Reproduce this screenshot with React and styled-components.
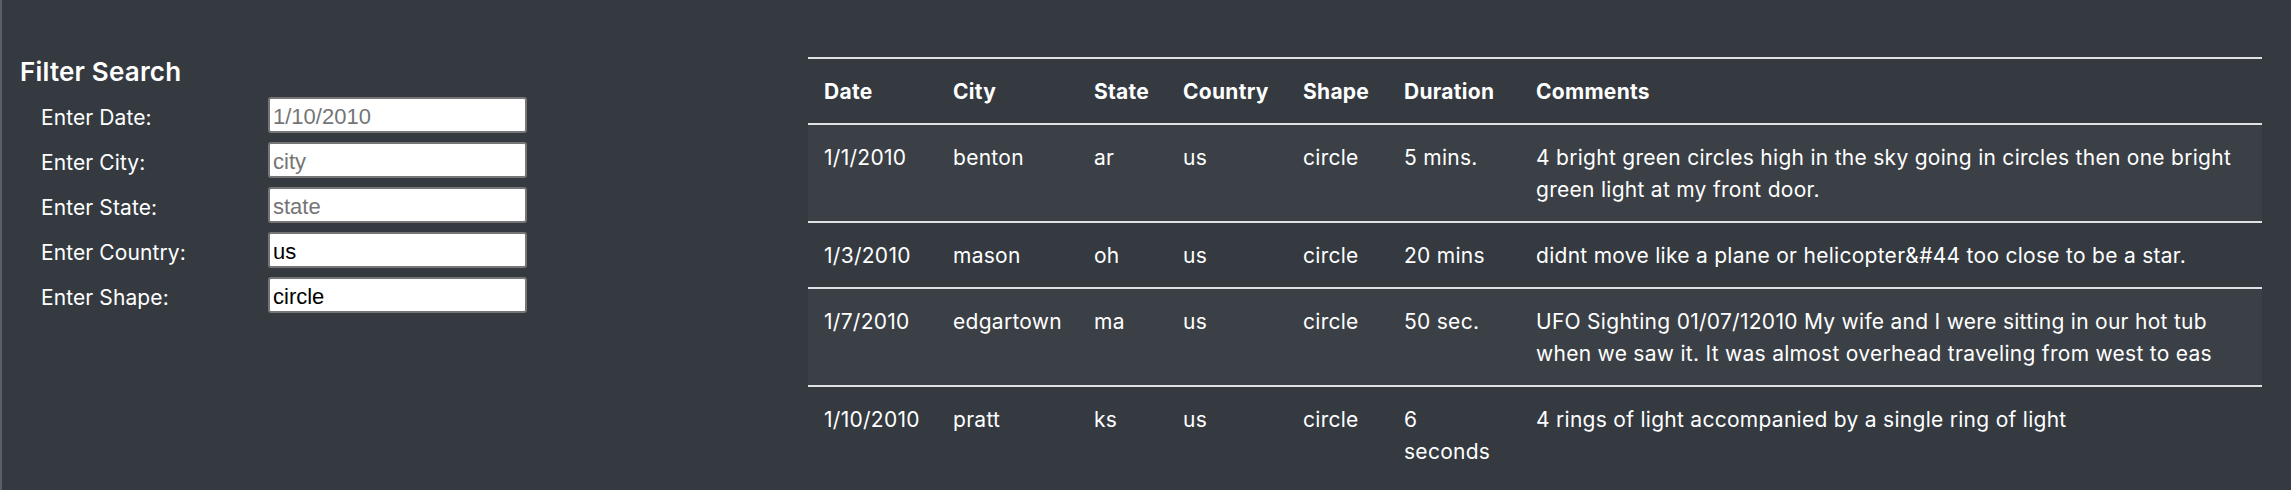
import React from 'react';
import styled, { createGlobalStyle } from 'styled-components';

// Base page styles
const GlobalStyle = createGlobalStyle`
  html, body {
    margin: 0;
    padding: 0;
    background-color: #343a40;
  }

  body {
    font-family: Inter, "Liberation Sans", sans-serif;
    color: #fff;
  }
`;

// Two column page: filter form on the left, results table on the right
const Page = styled.div`
  display: grid;
  grid-template-columns: 806px 1fr;
  min-height: 490px;
  box-sizing: border-box;
  border-left: 2px solid #5b6066;
  padding: 57px 29px 0 0;
`;

// Filter panel
const FilterPanel = styled.aside`
  padding-left: 18px;
`;

const PanelTitle = styled.h4`
  margin: 0;
  font-size: 26px;
  font-weight: 600;
  line-height: 30px;
  letter-spacing: 0.2px;
`;

const FilterForm = styled.form`
  display: flex;
  flex-direction: column;
  gap: 9px;
  margin-top: 10px;
  padding-left: 21px;
`;

const FieldRow = styled.div`
  display: grid;
  grid-template-columns: 227px 259px;
  align-items: center;
`;

const FieldLabel = styled.label`
  padding-top: 5px;
  font-size: 21px;
  line-height: 28px;
  letter-spacing: 0.1px;
`;

const FieldInput = styled.input`
  box-sizing: border-box;
  width: 259px;
  height: 36px;
  padding: 4px 3px 0;
  border: 2px solid #767676;
  border-radius: 3px;
  background-color: #fff;
  color: #000;
  font-family: "Liberation Sans", Arial, sans-serif;
  font-size: 22px;

  &::placeholder {
    color: #757575;
  }
`;

// Results table
const TablePanel = styled.section``;

const Table = styled.table`
  width: 100%;
  border-collapse: collapse;
  table-layout: fixed;
  color: #fff;
  font-size: 21px;
  line-height: 32px;
  letter-spacing: 0.28px;
`;

const Col = styled.col`
  width: ${props => props.width}px;
`;

const HeadCell = styled.th`
  padding: 17px 16px 15px;
  text-align: left;
  font-weight: 700;
  vertical-align: bottom;
  border-top: 2px solid #dee2e6;
  border-bottom: 2px solid #dee2e6;
`;

const Row = styled.tr`
  &:nth-of-type(odd) {
    background-color: rgba(255, 255, 255, 0.035);
  }
`;

const Cell = styled.td`
  padding: 17px 16px 15px;
  vertical-align: top;
  border-top: 2px solid #dee2e6;
`;

const fields = [
  { id: 'datetime', label: 'Enter Date:', placeholder: '1/10/2010', value: '' },
  { id: 'city', label: 'Enter City:', placeholder: 'city', value: '' },
  { id: 'state', label: 'Enter State:', placeholder: 'state', value: '' },
  { id: 'country', label: 'Enter Country:', placeholder: 'country', value: 'us' },
  { id: 'shape', label: 'Enter Shape:', placeholder: 'shape', value: 'circle' },
];

const columns = [
  { key: 'datetime', title: 'Date', width: 129 },
  { key: 'city', title: 'City', width: 141 },
  { key: 'state', title: 'State', width: 89 },
  { key: 'country', title: 'Country', width: 120 },
  { key: 'shape', title: 'Shape', width: 101 },
  { key: 'durationMinutes', title: 'Duration', width: 132 },
  { key: 'comments', title: 'Comments' },
];

const sightings = [
  {
    datetime: '1/1/2010',
    city: 'benton',
    state: 'ar',
    country: 'us',
    shape: 'circle',
    durationMinutes: '5 mins.',
    comments: '4 bright green circles high in the sky going in circles then one bright green light at my front door.',
  },
  {
    datetime: '1/3/2010',
    city: 'mason',
    state: 'oh',
    country: 'us',
    shape: 'circle',
    durationMinutes: '20 mins',
    comments: 'didnt move like a plane or helicopter&#44 too close to be a star.',
  },
  {
    datetime: '1/7/2010',
    city: 'edgartown',
    state: 'ma',
    country: 'us',
    shape: 'circle',
    durationMinutes: '50 sec.',
    comments: 'UFO Sighting 01/07/12010 My wife and I were sitting in our hot tub when we saw it. It was almost overhead traveling from west to eas',
  },
  {
    datetime: '1/10/2010',
    city: 'pratt',
    state: 'ks',
    country: 'us',
    shape: 'circle',
    durationMinutes: '6 seconds',
    comments: '4 rings of light accompanied by a single ring of light',
  },
];

const App = () => {
  return (
    <>
      <GlobalStyle />
      <Page>
        <FilterPanel>
          <PanelTitle>Filter Search</PanelTitle>
          <FilterForm onSubmit={e => e.preventDefault()}>
            {fields.map(field => (
              <FieldRow key={field.id}>
                <FieldLabel htmlFor={field.id}>{field.label}</FieldLabel>
                <FieldInput
                  id={field.id}
                  type="text"
                  placeholder={field.placeholder}
                  defaultValue={field.value}
                />
              </FieldRow>
            ))}
          </FilterForm>
        </FilterPanel>

        <TablePanel>
          <Table>
            <colgroup>
              {columns.map(col => (
                <Col key={col.key} width={col.width} />
              ))}
            </colgroup>
            <thead>
              <tr>
                {columns.map(col => (
                  <HeadCell key={col.key}>{col.title}</HeadCell>
                ))}
              </tr>
            </thead>
            <tbody>
              {sightings.map((s, i) => (
                <Row key={i}>
                  {columns.map(col => (
                    <Cell key={col.key}>{s[col.key]}</Cell>
                  ))}
                </Row>
              ))}
            </tbody>
          </Table>
        </TablePanel>
      </Page>
    </>
  );
};

export default App;
